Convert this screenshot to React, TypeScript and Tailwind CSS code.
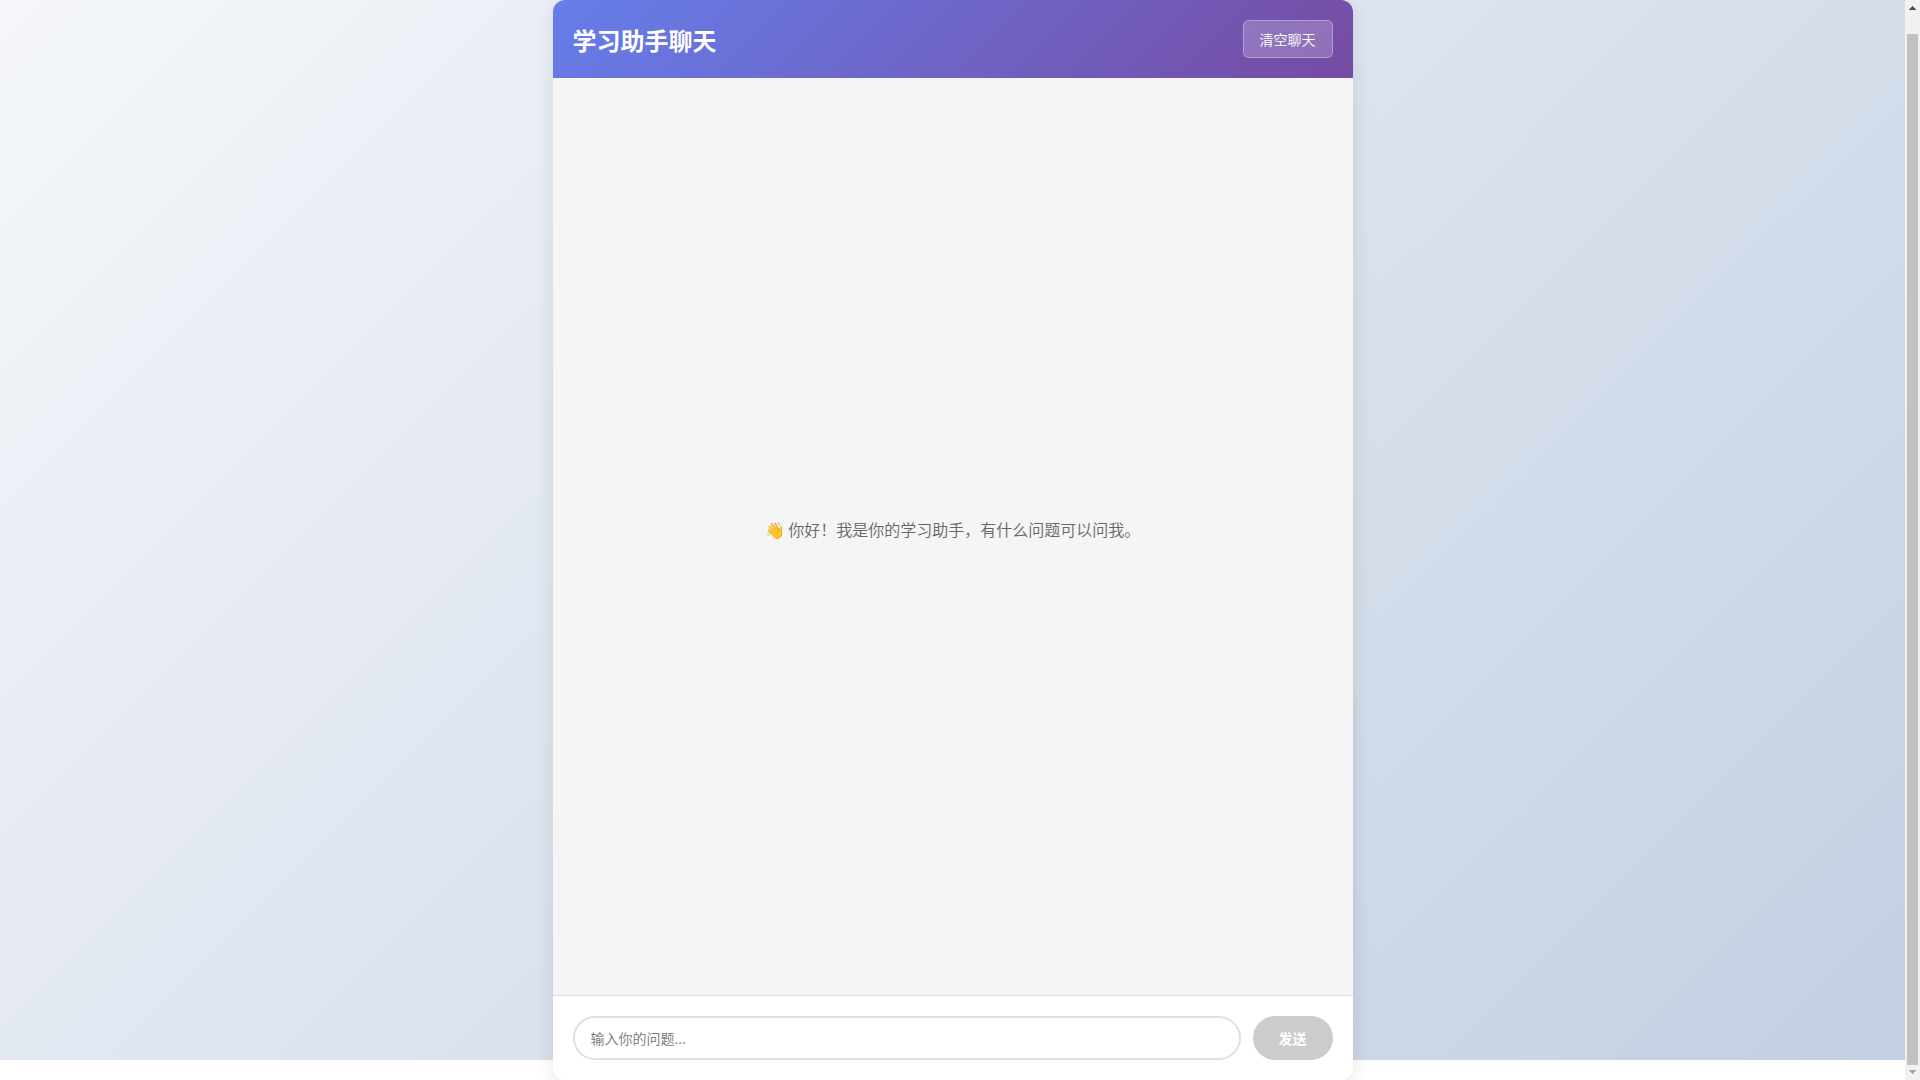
import { useState } from "react"

function Scrollbar() {
    return (
        <div aria-hidden="true" className="flex w-[15px] shrink-0 flex-col items-center justify-between bg-[#f1f1f1]">
            <svg width="15" height="15" viewBox="0 0 15 15" shapeRendering="crispEdges" className="shrink-0">
                <path d="M7 6h1v1h1v1h1v1h1v1H4V9h1V8h1V7h1z" fill="#505050" />
            </svg>
            <div className="mt-[19px] w-[11px] flex-1 bg-[#c1c1c1]" />
            <svg width="15" height="15" viewBox="0 0 15 15" shapeRendering="crispEdges" className="shrink-0">
                <path d="M4 5h7v1h-1v1H9v1H8v1H7V8H6V7H5V6H4z" fill="#a3a3a3" />
            </svg>
        </div>
    )
}

export default function App() {
    const [question, setQuestion] = useState("")

    return (
        <div lang="zh-CN" className="flex h-screen overflow-hidden bg-white font-['Noto_Sans_CJK_SC',sans-serif] font-[350]">
            <main className="flex min-w-0 flex-1 justify-center bg-[linear-gradient(135deg,#f5f7fa_0%,#c3cfe2_100%)] bg-size-[100%_100%] bg-position-[0_-20px] bg-no-repeat">
                <section className="flex w-full max-w-[800px] flex-col overflow-hidden rounded-xl bg-white shadow-[0_4px_20px_rgba(0,0,0,0.1)]">
                    <header className="flex items-center justify-between bg-linear-[135deg,#667eea_0%,#764ba2_100%] p-5 text-white">
                        <h1 className="pt-0.5 text-2xl font-bold">学习助手聊天</h1>
                        <button type="button"
                            onClick={() => setQuestion("")}
                            className="rounded-md border border-white/30 bg-white/20 px-4 py-2 text-sm">
                            清空聊天
                        </button>
                    </header>

                    <div className="flex flex-1 items-center justify-center bg-[#f5f5f5] px-5 pb-4">
                        <p className="text-base text-[#666]">👋 你好！我是你的学习助手，有什么问题可以问我。</p>
                    </div>

                    <form onSubmit={event => event.preventDefault()} className="flex gap-3 border-t border-[#e0e0e0] bg-white p-5">
                        <input type="text"
                            aria-label="输入你的问题"
                            value={question}
                            onChange={event => setQuestion(event.target.value)}
                            placeholder="输入你的问题..."
                            className="h-11 min-w-0 flex-1 rounded-3xl border-2 border-[#e0e0e0] px-4 text-sm outline-none placeholder:text-[#757575]" />
                        <button type="submit"
                            disabled={!question.trim()}
                            className="h-11 w-20 rounded-3xl bg-[#667eea] text-sm font-bold text-white disabled:bg-[#ccc]">
                            发送
                        </button>
                    </form>
                </section>
            </main>
            <Scrollbar />
        </div>
    )
}
